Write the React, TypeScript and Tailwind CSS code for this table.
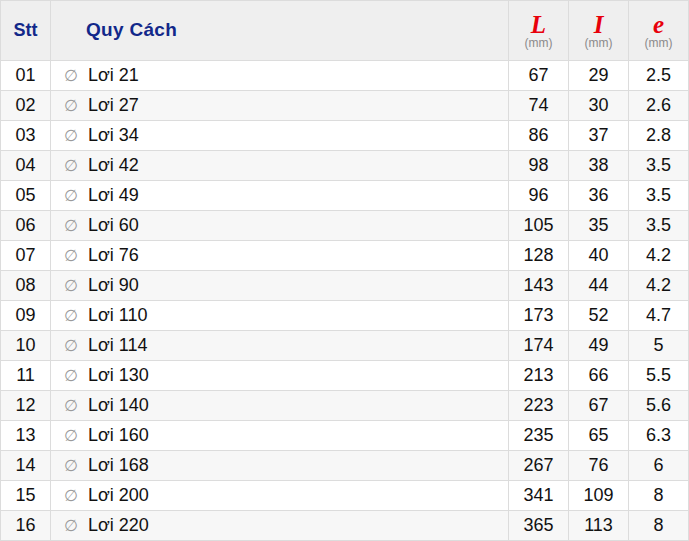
const rows: [string, string, string, string, string][] = [
  ["01", "Lơi 21", "67", "29", "2.5"],
  ["02", "Lơi 27", "74", "30", "2.6"],
  ["03", "Lơi 34", "86", "37", "2.8"],
  ["04", "Lơi 42", "98", "38", "3.5"],
  ["05", "Lơi 49", "96", "36", "3.5"],
  ["06", "Lơi 60", "105", "35", "3.5"],
  ["07", "Lơi 76", "128", "40", "4.2"],
  ["08", "Lơi 90", "143", "44", "4.2"],
  ["09", "Lơi 110", "173", "52", "4.7"],
  ["10", "Lơi 114", "174", "49", "5"],
  ["11", "Lơi 130", "213", "66", "5.5"],
  ["12", "Lơi 140", "223", "67", "5.6"],
  ["13", "Lơi 160", "235", "65", "6.3"],
  ["14", "Lơi 168", "267", "76", "6"],
  ["15", "Lơi 200", "341", "109", "8"],
  ["16", "Lơi 220", "365", "113", "8"],
]

const cell = "border-l border-t border-[#dcdcdc] flex items-center"

function UnitHead({ letter, last = false }: { letter: string; last?: boolean }) {
  return (
    <div className={`${cell} flex-col justify-center bg-[#efefef] ${last ? "border-r" : ""}`}>
      <span className="mt-[2px] font-['Liberation_Serif',serif] text-[25px] font-bold italic leading-[24px] text-[#e8000b]">
        {letter}
      </span>
      <span className="text-[12px] leading-[13px] text-[#8a8a8a]">(mm)</span>
    </div>
  )
}

export default function App() {
  return (
    <div className="w-[689px] bg-white font-['Liberation_Sans',Arial,sans-serif] text-[18px] text-[#111]">
      <div className="grid grid-cols-[50px_458px_60px_60px_61px] border-b border-[#dcdcdc]">
        {/* Header */}
        <div className={`${cell} h-[60px] justify-center bg-[#efefef] text-[18px] font-bold text-[#12288a]`}>
          Stt
        </div>
        <div className={`${cell} bg-[#efefef] pl-[35px] text-[19px] font-bold tracking-[0.3px] text-[#12288a]`}>
          Quy Cách
        </div>
        <UnitHead letter="L" />
        <UnitHead letter="I" />
        <UnitHead letter="e" last />

        {rows.map(([stt, name, l, i, e], idx) => {
          const bg = idx % 2 === 0 ? "bg-white" : "bg-[#f7f7f7]"
          return [
            <div key={stt + "a"} className={`${cell} ${bg} h-[30px] justify-center`}>
              {stt}
            </div>,
            <div key={stt + "b"} className={`${cell} ${bg} pl-[13px]`}>
              <span className="w-[24px] font-['DejaVu_Sans',sans-serif] text-[16px] text-[#9a9a9a]">∅</span>
              <span>{name}</span>
            </div>,
            <div key={stt + "c"} className={`${cell} ${bg} justify-center`}>
              {l}
            </div>,
            <div key={stt + "d"} className={`${cell} ${bg} justify-center`}>
              {i}
            </div>,
            <div key={stt + "e"} className={`${cell} ${bg} justify-center border-r`}>
              {e}
            </div>,
          ]
        })}
      </div>
    </div>
  )
}
